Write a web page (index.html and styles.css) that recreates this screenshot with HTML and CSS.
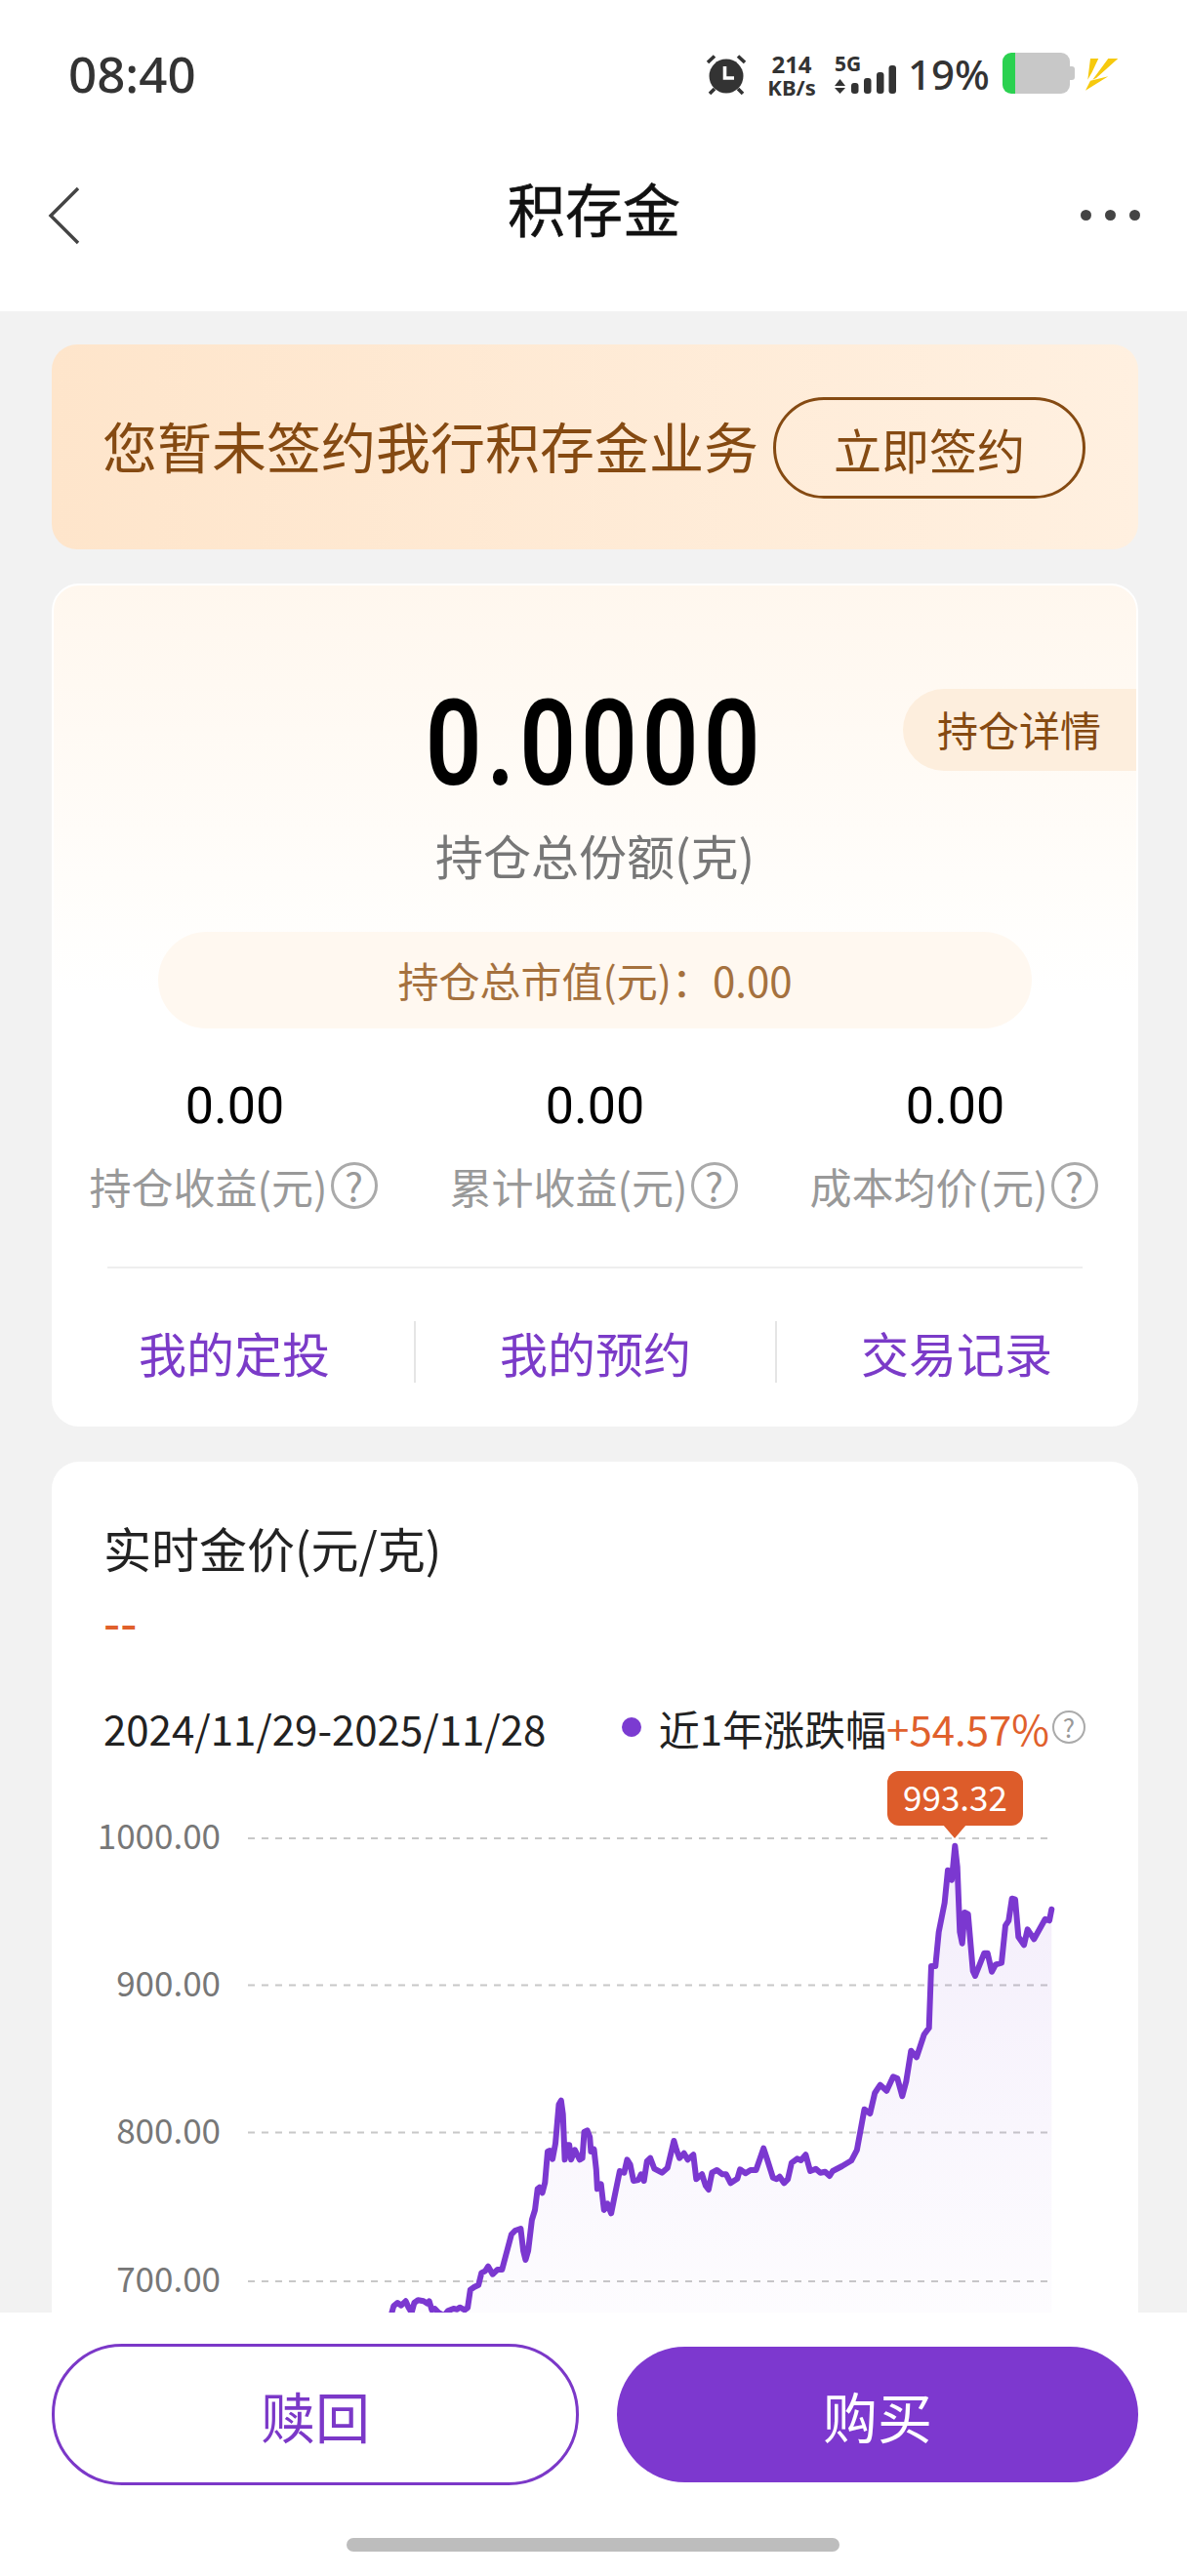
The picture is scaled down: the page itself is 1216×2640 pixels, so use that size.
FILE: index.html
```html
<!DOCTYPE html>
<html>
<head>
  <meta charset="utf-8"/>
  <link rel="stylesheet" href="styles.css">
</head>
<body>
  <div class="statusbar">
    <span class="clock">08:40</span>
    <div class="status-icons">
      <svg class="ic-alarm" width="44" height="44" viewBox="0 0 44 44">
        <circle cx="22" cy="24" r="17.5" fill="#333"/>
        <path d="M3 10 L10 3.5 M41 10 L34 3.5 M10 37 L5 42 M34 37 L39 42" stroke="#333" stroke-width="3.6" fill="none"/>
        <path d="M20.5 14 V26 H30" stroke="#fff" stroke-width="3.6" fill="none"/>
      </svg>
      <div class="speed"><span class="speed-num">214</span><span>KB/s</span></div>
      <div class="signal">
        <span class="gen">5G</span>
        <svg class="bars" width="63" height="29" viewBox="0 0 63 29">
          <path d="M0 21 L5.5 14 L11 21 Z M0 23 L11 23 L5.5 29 Z" fill="#333"/>
          <rect x="17" y="18" width="7.5" height="11" rx="3" fill="#333"/>
          <rect x="30" y="13" width="7.5" height="16" rx="3" fill="#333"/>
          <rect x="43" y="7" width="7.5" height="22" rx="3" fill="#333"/>
          <rect x="55.5" y="0" width="7.5" height="29" rx="3" fill="#333"/>
        </svg>
      </div>
      <span class="percent">19%</span>
      <svg class="ic-battery" width="74" height="42" viewBox="0 0 74 42">
        <path d="M12 0 H60 A9 9 0 0 1 69 9 V33 A9 9 0 0 1 60 42 H12 Z" fill="#c8c8c8"/>
        <path d="M69 14 H71 A3 3 0 0 1 74 17 V25 A3 3 0 0 1 71 28 H69 Z" fill="#c8c8c8"/>
        <path d="M13 0 V42 H9 A9 9 0 0 1 0 33 V9 A9 9 0 0 1 9 0 Z" fill="#2bd150"/>
      </svg>
      <svg class="ic-bolt" width="34" height="33" viewBox="0 0 34 33">
        <path d="M5 0 H13.3 L6.7 14 L2.3 21.7 Z M23.3 0 H33.3 L11 20 L7.3 21.7 Z M5 22.7 L23.3 18.3 L0 32.7 Z" fill="#f6c90e"/>
      </svg>
    </div>
  </div>

  <div class="navbar">
    <svg class="nav-back" width="34" height="60" viewBox="0 0 34 60">
      <path d="M31 2 L3 30 L31 58" fill="none" stroke="#444" stroke-width="3.4"/>
    </svg>
    <h1 class="nav-title">积存金</h1>
    <div class="nav-more"><i></i><i></i><i></i></div>
  </div>

  <div class="content">
    <div class="sign-banner">
      <span class="sign-text">您暂未签约我行积存金业务</span>
      <span class="sign-btn">立即签约</span>
    </div>

    <div class="card holding">
      <div class="detail-tag">持仓详情</div>
      <div class="total"><span class="total-num">0.0000</span></div>
      <div class="total-label">持仓总份额(克)</div>
      <div class="market-pill">持仓总市值(元)：0.00</div>
      <div class="stats">
        <div class="stat">
          <div class="stat-num">0.00</div>
          <div class="stat-label">持仓收益(元)<span class="help">?</span></div>
        </div>
        <div class="stat">
          <div class="stat-num">0.00</div>
          <div class="stat-label">累计收益(元)<span class="help">?</span></div>
        </div>
        <div class="stat">
          <div class="stat-num">0.00</div>
          <div class="stat-label">成本均价(元)<span class="help">?</span></div>
        </div>
      </div>
      <div class="divider"></div>
      <div class="links">
        <span class="link">我的定投</span>
        <span class="link">我的预约</span>
        <span class="link">交易记录</span>
      </div>
    </div>

    <div class="card price">
      <div class="price-title">实时金价(元/克)</div>
      <div class="price-now">--</div>
      <div class="range">
        <span class="range-date">2024/11/29-2025/11/28</span>
        <span class="range-change">
          <i class="dot"></i>近1年涨跌幅<em>+54.57%</em><span class="help small">?</span>
        </span>
      </div>
      <svg class="chart" width="1113" height="600" viewBox="53 1810 1113 600">
        <defs>
          <linearGradient id="areaFill" x1="0" y1="0" x2="0" y2="1">
            <stop offset="0" stop-color="#7b38d0" stop-opacity="0.09"/>
            <stop offset="1" stop-color="#7b38d0" stop-opacity="0.01"/>
          </linearGradient>
        </defs>
        <g class="grid">
          <line x1="254" y1="1884" x2="1075" y2="1884"/>
          <line x1="254" y1="2034.5" x2="1075" y2="2034.5"/>
          <line x1="254" y1="2185.5" x2="1075" y2="2185.5"/>
          <line x1="254" y1="2338" x2="1075" y2="2338"/>
        </g>
        <g class="y-labels">
          <text x="226" y="1895">1000.00</text>
          <text x="226" y="2045.5">900.00</text>
          <text x="226" y="2196.5">800.00</text>
          <text x="226" y="2349">700.00</text>
        </g>
        <path fill="url(#areaFill)" d="M401.4 2370 L403.3 2363.3 L407.2 2360 L411 2362.7 L415.6 2358.3 L418.6 2365 L421.7 2370 L424.4 2360 L428.2 2357.3 L433.9 2358.3 L437.8 2360.7 L439.7 2358.3 L442.4 2367.3 L445.4 2366 L449.3 2370 L455 2373.3 L458.8 2368.3 L464.6 2366 L468.4 2366.7 L471.1 2364.7 L476 2367.3 L479.1 2365 L481.8 2346.7 L485.6 2344 L490.2 2341.7 L493.3 2329.3 L497.1 2327.3 L500.1 2322.7 L504.7 2330.7 L509.7 2326 L514.3 2326 L518.1 2311.7 L523.9 2290 L527.7 2286 L533.4 2284 L536.1 2306.7 L538.4 2316 L541.1 2306.7 L544.9 2275 L548 2265 L550.7 2243.3 L552.6 2241.7 L555.6 2247.3 L558.3 2236.7 L561 2205 L563.3 2204 L566 2212.7 L569 2196.7 L572.5 2156.7 L574.8 2152.7 L576.7 2166.7 L578.6 2213.3 L581.3 2198.3 L583.2 2198.3 L585.1 2213.3 L588.9 2203.3 L593.9 2213.3 L596.6 2211.7 L598.5 2185 L601.6 2183.3 L604.2 2190 L605.4 2205 L608.5 2202.7 L610.8 2223.3 L611.9 2243.3 L615.7 2238.3 L618.8 2265 L622.2 2258.3 L626.1 2268.3 L629.1 2253.3 L634.9 2225 L639.4 2226.7 L642.5 2213.3 L645.6 2218.3 L649 2235 L654 2234 L656.7 2228.3 L659.7 2235 L662.8 2215 L666.2 2211.7 L670.4 2222.7 L678.1 2226.7 L683.8 2221.7 L690.4 2194 L693 2203.3 L696.1 2211.7 L700.7 2206.7 L704.5 2213.3 L710.3 2208.3 L713.3 2233.3 L719.1 2228.3 L722.9 2240 L725.9 2244 L729.4 2226.7 L734.4 2224 L740.1 2228.3 L743.9 2228.3 L748.5 2237.3 L755.4 2232.7 L758.1 2223.3 L763.8 2227.3 L768.8 2224 L774.5 2224 L782.2 2201.7 L786 2213.3 L791.8 2231.7 L795.6 2233.3 L798.7 2230.7 L803.2 2237.3 L807.1 2233.3 L810.9 2216.7 L816.6 2212.3 L820.5 2214 L825.4 2208.3 L830 2225 L835.8 2222.7 L840.4 2226.7 L845.3 2225.7 L849.9 2230 L853 2225 L862.6 2220 L872.1 2214.3 L877.9 2203.3 L885.5 2161.7 L891.3 2166 L896.2 2145 L901.7 2136.7 L908.3 2142.7 L915 2128.3 L919.3 2130 L924.3 2148.3 L928.3 2133.3 L933.3 2101.7 L939 2108.3 L946.7 2085 L951.7 2078.3 L954 2015 L958.3 2015 L961.7 1980 L967.7 1950 L971 1916.7 L975 1926.7 L978.3 1891.7 L980.7 1913.3 L983.3 1980 L985.7 1991.7 L988.3 1960 L991.7 1961.7 L996.7 2020 L999 2025 L1008.3 2001.7 L1011.7 2001.7 L1016 2020.7 L1020 2013.3 L1026 2011.7 L1030 1973.3 L1033.3 1968.3 L1036.7 1945.7 L1040 1946.7 L1043.3 1985 L1049 1993.3 L1052.7 1977.3 L1059.3 1987.3 L1070.7 1966.7 L1075 1968.3 L1077.3 1956.7 V2400 H401.4 Z"/>
        <path class="price-line" d="M401.4 2370 L403.3 2363.3 L407.2 2360 L411 2362.7 L415.6 2358.3 L418.6 2365 L421.7 2370 L424.4 2360 L428.2 2357.3 L433.9 2358.3 L437.8 2360.7 L439.7 2358.3 L442.4 2367.3 L445.4 2366 L449.3 2370 L455 2373.3 L458.8 2368.3 L464.6 2366 L468.4 2366.7 L471.1 2364.7 L476 2367.3 L479.1 2365 L481.8 2346.7 L485.6 2344 L490.2 2341.7 L493.3 2329.3 L497.1 2327.3 L500.1 2322.7 L504.7 2330.7 L509.7 2326 L514.3 2326 L518.1 2311.7 L523.9 2290 L527.7 2286 L533.4 2284 L536.1 2306.7 L538.4 2316 L541.1 2306.7 L544.9 2275 L548 2265 L550.7 2243.3 L552.6 2241.7 L555.6 2247.3 L558.3 2236.7 L561 2205 L563.3 2204 L566 2212.7 L569 2196.7 L572.5 2156.7 L574.8 2152.7 L576.7 2166.7 L578.6 2213.3 L581.3 2198.3 L583.2 2198.3 L585.1 2213.3 L588.9 2203.3 L593.9 2213.3 L596.6 2211.7 L598.5 2185 L601.6 2183.3 L604.2 2190 L605.4 2205 L608.5 2202.7 L610.8 2223.3 L611.9 2243.3 L615.7 2238.3 L618.8 2265 L622.2 2258.3 L626.1 2268.3 L629.1 2253.3 L634.9 2225 L639.4 2226.7 L642.5 2213.3 L645.6 2218.3 L649 2235 L654 2234 L656.7 2228.3 L659.7 2235 L662.8 2215 L666.2 2211.7 L670.4 2222.7 L678.1 2226.7 L683.8 2221.7 L690.4 2194 L693 2203.3 L696.1 2211.7 L700.7 2206.7 L704.5 2213.3 L710.3 2208.3 L713.3 2233.3 L719.1 2228.3 L722.9 2240 L725.9 2244 L729.4 2226.7 L734.4 2224 L740.1 2228.3 L743.9 2228.3 L748.5 2237.3 L755.4 2232.7 L758.1 2223.3 L763.8 2227.3 L768.8 2224 L774.5 2224 L782.2 2201.7 L786 2213.3 L791.8 2231.7 L795.6 2233.3 L798.7 2230.7 L803.2 2237.3 L807.1 2233.3 L810.9 2216.7 L816.6 2212.3 L820.5 2214 L825.4 2208.3 L830 2225 L835.8 2222.7 L840.4 2226.7 L845.3 2225.7 L849.9 2230 L853 2225 L862.6 2220 L872.1 2214.3 L877.9 2203.3 L885.5 2161.7 L891.3 2166 L896.2 2145 L901.7 2136.7 L908.3 2142.7 L915 2128.3 L919.3 2130 L924.3 2148.3 L928.3 2133.3 L933.3 2101.7 L939 2108.3 L946.7 2085 L951.7 2078.3 L954 2015 L958.3 2015 L961.7 1980 L967.7 1950 L971 1916.7 L975 1926.7 L978.3 1891.7 L980.7 1913.3 L983.3 1980 L985.7 1991.7 L988.3 1960 L991.7 1961.7 L996.7 2020 L999 2025 L1008.3 2001.7 L1011.7 2001.7 L1016 2020.7 L1020 2013.3 L1026 2011.7 L1030 1973.3 L1033.3 1968.3 L1036.7 1945.7 L1040 1946.7 L1043.3 1985 L1049 1993.3 L1052.7 1977.3 L1059.3 1987.3 L1070.7 1966.7 L1075 1968.3 L1077.3 1956.7"/>
        <rect x="909" y="1815" width="139" height="56" rx="12" fill="#dd5c2a"/>
        <path d="M966 1870 H990 L978 1884 Z" fill="#dd5c2a"/>
        <text class="tip-text" x="978.5" y="1856">993.32</text>
      </svg>
    </div>
  </div>

  <div class="footer">
    <div class="actions">
      <span class="btn btn-line">赎回</span>
      <span class="btn btn-fill">购买</span>
    </div>
    <div class="home-bar"></div>
  </div>
</body>
</html>
```

FILE: styles.css
```css
* { box-sizing: border-box; }
html, body { margin: 0; padding: 0; }
body {
  width: 1216px;
  height: 2640px;
  overflow: hidden;
  display: flex;
  flex-direction: column;
  background: #f2f2f2;
  color: #222;
  font-family: "Noto Sans CJK SC", "Noto Sans", sans-serif;
}

/* status bar */
.statusbar {
  height: 150px;
  background: #fff;
  display: flex;
  align-items: flex-start;
  justify-content: space-between;
  padding: 0 70px 0 70px;
}
.clock {
  margin-top: 42px;
  font-family: "Noto Sans", sans-serif;
  font-size: 51px;
  line-height: 66px;
  font-weight: 500;
  color: #333;
}
.status-icons {
  display: flex;
  align-items: flex-start;
  color: #333;
  margin-top: 54px;
  font-family: "Noto Sans", sans-serif;
}
.ic-alarm { margin-right: 19px; }
.speed {
  display: flex;
  flex-direction: column;
  align-items: center;
  font-size: 22px;
  line-height: 22px;
  font-weight: 700;
  width: 52px;
  margin-right: 18px;
}
.speed-num { font-size: 24px; line-height: 24px; }
.signal { width: 63px; display: flex; flex-direction: column; }
.gen { font-size: 21px; line-height: 22px; font-weight: 700; }
.bars { margin-top: -9px; display: block; }
.percent {
  font-size: 42px;
  line-height: 44px;
  font-weight: 500;
  width: 85px;
  margin-left: 12px;
  margin-right: 12px;
  white-space: nowrap;
}
.ic-battery { margin-right: 11px; }
.ic-bolt { margin-top: 6px; }

/* nav */
.navbar {
  height: 169px;
  background: #fff;
  display: grid;
  grid-template-columns: 1fr auto 1fr;
  align-items: start;
  padding: 41px 48px 0 49px;
}
.nav-title {
  margin: -14px 0 0;
  font-size: 59px;
  line-height: 72px;
  font-weight: 400;
  color: #111;
  -webkit-text-stroke: 0.6px #111;
}
.nav-more { display: flex; gap: 14px; margin-top: 24px; justify-self: end; }
.nav-more i { width: 11px; height: 11px; border-radius: 50%; background: #444; }

/* scrolled content, cut off by the footer */
.content {
  flex: 1;
  min-height: 0;
  overflow: hidden;
  padding: 34px 50px 0 53px;
}
.sign-banner {
  height: 210px;
  border-radius: 26px;
  background: linear-gradient(90deg, #fee5cb, #fff0e0);
  display: flex;
  align-items: center;
  padding-left: 52px;
  color: #854a12;
}
.sign-text { font-size: 56px; line-height: 70px; white-space: nowrap; margin-top: -5px; }
.sign-btn {
  margin: 2px 0 0 15px;
  width: 320px;
  height: 104px;
  border: 3px solid #854a12;
  border-radius: 52px;
  font-size: 49px;
  display: flex;
  align-items: center;
  justify-content: center;
}

.card {
  position: relative;
  background: #fff;
  border-radius: 28px;
}
.holding {
  margin-top: 35px;
  height: 864px;
  padding: 100px 0 0;
  border: 2px solid #fff;
  background: linear-gradient(180deg, #fff7ee 0, #fffdfa 300px, #fff 420px);
}
.detail-tag {
  position: absolute;
  right: 0;
  top: 106px;
  width: 239px;
  height: 84px;
  padding-left: 35px;
  border-radius: 42px 0 0 42px;
  background: #fdeedd;
  color: #854a12;
  font-size: 42px;
  line-height: 82px;
}
.total { text-align: center; height: 126px; line-height: 126px; }
.total-num {
  display: inline-block;
  font-family: Roboto, sans-serif;
  font-size: 122px;
  font-weight: 600;
  letter-spacing: 6px;
  color: #000;
  transform: scaleX(0.83);
}
.total-label {
  margin-top: 20px;
  text-align: center;
  font-size: 49px;
  line-height: 60px;
  color: #777;
}
.market-pill {
  margin: 49px 107px 0 107px;
  height: 99px;
  border-radius: 50px;
  background: #fff8f0;
  color: #a5713e;
  font-size: 42px;
  line-height: 97px;
  text-align: center;
}
.stats {
  margin-top: 50px;
  display: grid;
  grid-template-columns: repeat(3, 369px);
  justify-content: center;
}
.stat { text-align: center; }
.stat-num {
  font-family: Roboto, sans-serif;
  font-size: 52px;
  line-height: 60px;
  font-weight: 400;
  color: #000;
}
.stat-label {
  margin-top: 21px;
  height: 60px;
  font-size: 43px;
  line-height: 60px;
  color: #999;
  display: flex;
  align-items: center;
  justify-content: center;
  white-space: nowrap;
  padding-right: 3px;
}
.help {
  display: inline-block;
  width: 48px;
  height: 48px;
  margin-left: 3px;
  border: 3px solid #aaa;
  border-radius: 50%;
  color: #999;
  font-size: 40px;
  line-height: 41px;
  text-align: center;
}
.divider {
  margin: 53px 55px 0;
  height: 2px;
  background: #eee;
}
.links {
  margin: 54px 0 0 -1px;
  display: grid;
  grid-template-columns: repeat(3, 370px);
}
.link {
  height: 63px;
  line-height: 63px;
  text-align: center;
  font-size: 49px;
  color: #7b3bc8;
  border-left: 2px solid #e5e5e5;
}
.link:first-child { border-left: 2px solid transparent; }

.price { margin-top: 36px; padding-top: 58px; height: 1000px; }
.price-title {
  padding-left: 53px;
  font-size: 49px;
  line-height: 60px;
  color: #222;
}
.price-now {
  margin-top: 15px;
  padding-left: 53px;
  font-size: 48px;
  line-height: 60px;
  font-weight: 500;
  color: #e0602c;
}
.range {
  margin-top: 49px;
  padding: 0 54px 0 53px;
  height: 60px;
  display: flex;
  align-items: center;
  justify-content: space-between;
  font-size: 42px;
  color: #222;
  white-space: nowrap;
}
.range-change { display: flex; align-items: center; }
.range-change em { font-style: normal; color: #e0602c; }
.dot {
  width: 20px;
  height: 20px;
  margin-right: 18px;
  border-radius: 50%;
  background: #7b3bd1;
}
.help.small {
  width: 34px;
  height: 34px;
  margin-left: 3px;
  border-width: 2px;
  font-size: 26px;
  line-height: 30px;
}
.chart { display: block; margin-top: 10px; }
.grid line {
  stroke: #c8c8c8;
  stroke-width: 2;
  stroke-dasharray: 7 7;
}
.y-labels text {
  font-size: 35px;
  fill: #777;
  text-anchor: end;
}
.price-line {
  fill: none;
  stroke: #7b38d0;
  stroke-width: 6;
  stroke-linejoin: round;
  stroke-linecap: round;
}
.tip-text {
  font-size: 35px;
  fill: #fff;
  text-anchor: middle;
}

/* bottom actions */
.footer {
  height: 270px;
  background: #fff;
  flex-shrink: 0;
  padding: 32px 50px 0 53px;
}
.actions {
  display: flex;
  align-items: center;
  justify-content: space-between;
  height: 145px;
}
.btn {
  display: flex;
  align-items: center;
  justify-content: center;
  font-size: 56px;
  border-radius: 72px;
}
.btn-line {
  width: 540px;
  height: 145px;
  border: 3px solid #7b38c8;
  color: #7b38c8;
}
.btn-fill {
  width: 534px;
  height: 139px;
  background: #7d38cf;
  color: #fff;
}
.home-bar {
  width: 505px;
  height: 14px;
  margin: 54px 0 0 302px;
  border-radius: 7px;
  background: #bdbdbd;
}
```
